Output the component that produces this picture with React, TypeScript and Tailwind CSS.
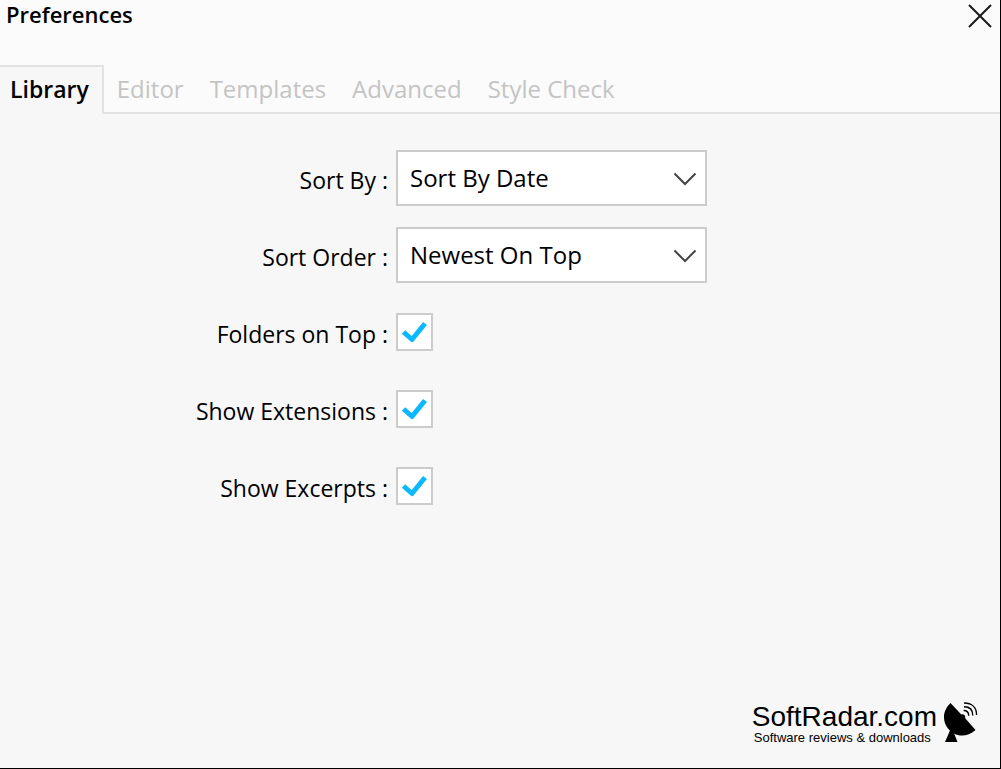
import { useState } from "react";

const tabs = ["Library", "Editor", "Templates", "Advanced", "Style Check"];

function SelectRow({ id, label, options }: { id: string; label: string; options: string[] }) {
  return (
    <>
      <label htmlFor={id} className="pr-2 pt-1 text-right">
        {label} :
      </label>
      <div className="relative h-14">
        <select
          id={id}
          className="h-full w-full appearance-none border-2 border-[#cccccc] bg-white pl-3 pr-12 text-[24px] leading-9 text-black outline-none"
        >
          {options.map((option) => (
            <option key={option}>{option}</option>
          ))}
        </select>
        <svg
          className="pointer-events-none absolute right-2.5 top-[22px] h-4 w-6"
          viewBox="0 0 24 16"
          fill="none"
          stroke="#444444"
          strokeWidth="2"
        >
          <path d="M1.5 1.5 12 12 22.5 1.5" />
        </svg>
      </div>
    </>
  );
}

function CheckRow({ id, label }: { id: string; label: string }) {
  return (
    <>
      <label htmlFor={id} className="pr-2 pt-1 text-right">
        {label} :
      </label>
      <div className="flex h-14 items-center">
        <div className="relative h-[38px] w-[37px]">
          <input
            id={id}
            type="checkbox"
            defaultChecked
            className="peer block h-full w-full appearance-none border-2 border-[#cccccc] bg-white"
          />
          <svg
            className="pointer-events-none absolute inset-0 hidden h-full w-full peer-checked:block"
            viewBox="0 0 37 38"
            fill="none"
            stroke="#0cb8ff"
            strokeWidth="5"
            strokeLinejoin="round"
          >
            <path d="M7.5 19 16 26.5 29 10.5" />
          </svg>
        </div>
      </div>
    </>
  );
}

function RadarDish() {
  return (
    <svg className="h-[42px] w-9" viewBox="0 0 36 42" fill="none" aria-hidden="true">
      <path
        d="M7.5 1C-1 9 -.5 20 5 26.5C11 34.5 23 36.5 32.5 28L22 16C23 13.5 20.5 11.5 18.3 12.5Z"
        fill="black"
      />
      <path d="M8.5 25 14.5 40H2Z" fill="black" />
      <path
        d="M20.6 8.5C24 8.5 25.7 10.5 25.7 13.7M21 4.8C26.5 4.8 29.8 8 29.8 13.5M21 1C29 1 33.6 5.5 33.6 13"
        stroke="black"
        strokeWidth="1.4"
      />
    </svg>
  );
}

export default function App() {
  const [active, setActive] = useState("Library");

  return (
    <div className="flex min-h-screen flex-col border-b border-r border-black bg-[#f7f7f7] font-['Open_Sans','Noto_Sans',sans-serif] text-[23px] leading-7 text-black">
      <header className="flex h-[65px] items-start justify-between bg-[#fbfbfb] pl-1.5 pr-2">
        <h1 className="text-[22px] font-semibold">Preferences</h1>
        <button type="button" aria-label="Close" className="mt-1 h-6 w-6">
          <svg className="h-6 w-6" viewBox="0 0 24 24" fill="none" stroke="#1a1a1a" strokeWidth="2">
            <path d="M1 1 23 23M23 1 1 23" />
          </svg>
        </button>
      </header>

      <nav className="flex h-[49px] bg-[#fbfbfb]" role="tablist">
        {tabs.map((tab) => (
          <button
            key={tab}
            type="button"
            role="tab"
            aria-selected={active === tab}
            onClick={() => setActive(tab)}
            className={
              active === tab
                ? "border-r-2 border-t-2 border-[#e2e2e2] bg-[#f7f7f7] pb-1 pl-2.5 pr-[13px] font-semibold"
                : "border-b-2 border-[#e2e2e2] px-[13px] text-[24px] text-[#c4c4c4]"
            }
          >
            {tab}
          </button>
        ))}
        <div className="grow border-b-2 border-[#e2e2e2]" />
      </nav>

      <main className="grid grid-cols-[396px_311px] items-center gap-y-[21px] pt-9">
        <SelectRow id="sort-by" label="Sort By" options={["Sort By Date", "Sort By Name"]} />
        <SelectRow id="sort-order" label="Sort Order" options={["Newest On Top", "Oldest On Top"]} />
        <CheckRow id="folders" label="Folders on Top" />
        <CheckRow id="extensions" label="Show Extensions" />
        <CheckRow id="excerpts" label="Show Excerpts" />
      </main>

      <footer className="mt-auto flex items-start justify-end gap-1.5 pb-[23px] pr-[21px] font-['Liberation_Sans',Arial,sans-serif]">
        <div className="pt-px">
          <p className="text-[28px] leading-7">SoftRadar.com</p>
          <p className="pl-0.5 text-[13px] leading-[14px]">Software reviews &amp; downloads</p>
        </div>
        <RadarDish />
      </footer>
    </div>
  );
}
